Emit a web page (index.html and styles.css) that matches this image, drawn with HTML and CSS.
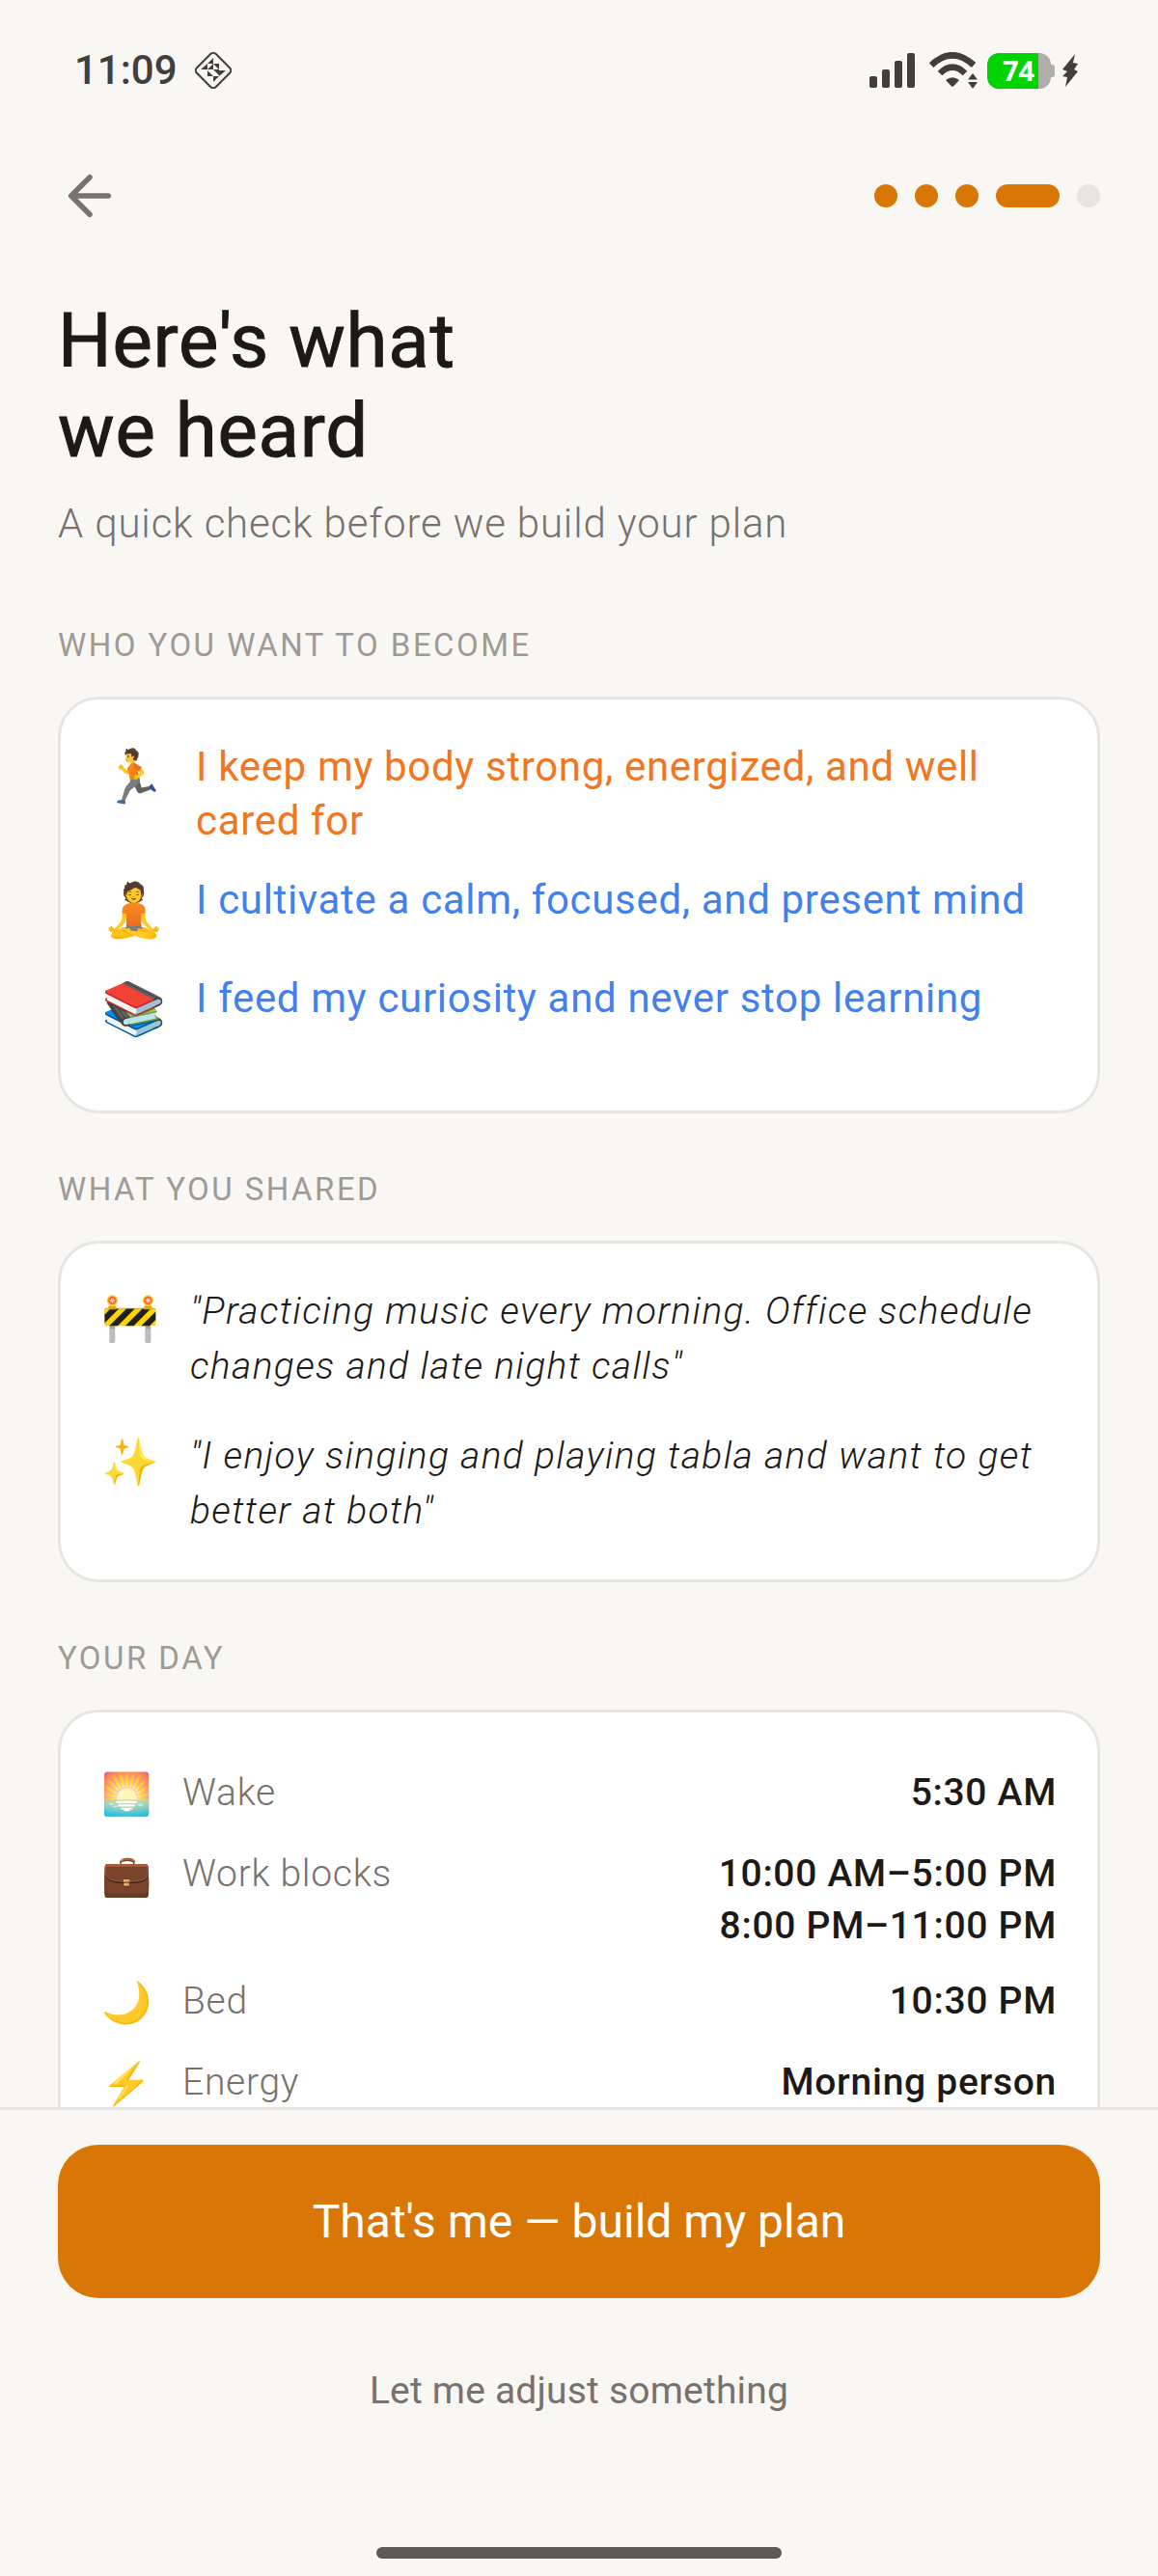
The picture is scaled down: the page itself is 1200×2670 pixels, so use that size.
FILE: index.html
```html
<!DOCTYPE html>
<html lang="en">
<head>
<meta charset="utf-8">
<meta name="viewport" content="width=device-width, initial-scale=1">
<title>Here's what we heard</title>
<link rel="stylesheet" href="styles.css">
</head>
<body>
<div class="app">
  <div class="status">
    <div class="status-left">
      <span class="time">11:09</span>
      <svg width="38" height="38" viewBox="0 0 38 38" aria-hidden="true">
        <rect x="5" y="5" width="28" height="28" rx="4" transform="rotate(45 19 19)" fill="none" stroke="#403f3c" stroke-width="2"/>
        <g fill="#403f3c"><path d="M19 6v6h-6zM13 12v6H6zM19 12h6v6zM13 18h6v-6zM19 18h6v6zM25 19h7l-7 6zM13 19v6h6zM19 25h6l-6 6z"/></g>
      </svg>
    </div>
    <div class="status-right">
      <svg class="signal" width="47" height="38" viewBox="0 0 47 38" aria-hidden="true"><g fill="#403f3c"><rect x="0" y="25" width="8" height="12" rx="2"/><rect x="13" y="18" width="8" height="19" rx="2"/><rect x="26" y="9" width="8" height="28" rx="2"/><rect x="39" y="1" width="8" height="36" rx="2"/></g></svg>
      <svg width="50" height="38" viewBox="0 0 50 38" aria-hidden="true"><g fill="none" stroke="#403f3c" stroke-width="6.500"><path d="M2 13.500Q24-7 46 13.500"/><path d="M11 22Q24 9 37 22"/></g><path d="M17 29q7-5.500 14 0l-5.500 6q-1.500 1.500-3 0z" fill="#403f3c"/><path d="M45 22l5 6.500H40zM45 38l5-7H40z" fill="#403f3c"/></svg>
      <span class="battery"><span class="battery-level">74</span></span>
      <svg width="18" height="38" viewBox="0 0 18 38" aria-hidden="true"><path d="M15 2L2 18l5 2-5 5 5 1-2 10 13-16-4-2 4-6-5-1z" fill="#403f3c"/></svg>
    </div>
  </div>

  <header class="nav">
    <button class="back" type="button" aria-label="Back">
      <svg width="66" height="66" viewBox="0 0 24 24" fill="none" stroke="currentColor" stroke-width="2" stroke-linecap="round" stroke-linejoin="round" aria-hidden="true"><path d="M19 12H5M12 19l-7-7 7-7"/></svg>
    </button>
    <div class="steps" role="img" aria-label="Step 4 of 5">
      <span class="step"></span><span class="step"></span><span class="step"></span><span class="step step-current"></span><span class="step step-next"></span>
    </div>
  </header>

  <main class="content">
    <h1>Here's what<br>we heard</h1>
    <p class="subtitle">A quick check before we build your plan</p>

    <section>
      <h2>WHO YOU WANT TO BECOME</h2>
      <ul class="card identities">
        <li><span class="emoji">🏃</span><span>I keep my body strong, energized, and well cared for</span></li>
        <li class="mind"><span class="emoji">🧘</span><span>I cultivate a calm, focused, and present mind</span></li>
        <li class="mind"><span class="emoji">📚</span><span>I feed my curiosity and never stop learning</span></li>
      </ul>
    </section>

    <section>
      <h2>WHAT YOU SHARED</h2>
      <ul class="card quotes">
        <li><span class="emoji">🚧</span><q>Practicing music every morning. Office schedule changes and late night calls</q></li>
        <li><span class="emoji">✨</span><q>I enjoy singing and playing tabla and want to get better at both</q></li>
      </ul>
    </section>

    <section>
      <h2>YOUR DAY</h2>
      <dl class="card day">
        <div><dt><span class="emoji">🌅</span>Wake</dt><dd>5:30 AM</dd></div>
        <div><dt><span class="emoji">💼</span>Work blocks</dt><dd>10:00 AM–5:00 PM<br>8:00 PM–11:00 PM</dd></div>
        <div><dt><span class="emoji">🌙</span>Bed</dt><dd>10:30 PM</dd></div>
        <div><dt><span class="emoji">⚡</span>Energy</dt><dd>Morning person</dd></div>
      </dl>
    </section>
  </main>

  <footer class="actions">
    <button class="primary" type="button">That's me — build my plan</button>
    <button class="secondary" type="button">Let me adjust something</button>
    <div class="home-bar"></div>
  </footer>
</div>
</body>
</html>
```
FILE: styles.css
```css
* { box-sizing: border-box; margin: 0; padding: 0; }
body { background: #f9f7f4; color: #1c1917; font-family: Roboto, sans-serif; }
button { border: 0; background: none; font: inherit; color: inherit; cursor: pointer; }
svg { display: block; }
ul { list-style: none; }
.app { display: flex; flex-direction: column; height: 100vh; }

.status { display: flex; justify-content: space-between; align-items: center; height: 146px; padding: 0 83px 0 77px; flex: none; }
.status-left { display: flex; align-items: center; gap: 18px; }
.status-right { display: flex; align-items: center; gap: 10px; }
.signal { margin-right: 5px; }
.time { font-size: 42px; line-height: 48px; font-weight: 500; color: #403f3c; }
.battery { position: relative; width: 66px; height: 37px; border-radius: 12px; background: linear-gradient(to right, #00d300 53px, #b0acab 53px); }
.battery::after { content: ""; position: absolute; right: -4px; top: 12px; width: 4px; height: 13px; border-radius: 0 3px 3px 0; background: #b0acab; }
.battery-level { display: block; padding-left: 16px; font: 700 29px/36px "Noto Sans", sans-serif; color: #fff; }

.nav { display: flex; justify-content: space-between; align-items: center; height: 114px; padding: 0 60px; flex: none; }
.back { color: #78716c; }
.steps { display: flex; gap: 18px; }
.step { width: 24px; height: 24px; border-radius: 12px; background: #d97706; }
.step-current { width: 66px; }
.step-next { background: #e7e5e4; }

.content { flex: 1; min-height: 0; overflow-y: auto; scrollbar-width: none; padding: 47px 60px 60px; }
h1 { font-size: 78px; line-height: 93px; font-weight: 400; -webkit-text-stroke: 1px currentColor; letter-spacing: 0.01em; }
.subtitle { margin-top: 21px; font-size: 42px; line-height: 57px; font-weight: 300; letter-spacing: 0.02em; color: #78716c; }
section { margin-top: 59px; }
.subtitle + section { margin-top: 78px; }
h2 { margin-bottom: 33px; font-size: 33px; line-height: 40px; font-weight: 400; letter-spacing: 0.075em; color: #a09a95; }
.card { padding: 42px; border: 3px solid #e7e5e4; border-radius: 42px; background: #fff; }
.emoji { flex: none; letter-spacing: 0; }

.identities li { display: flex; gap: 30px; min-height: 78px; margin-bottom: 24px; font-size: 42px; line-height: 56px; letter-spacing: 0.016em; color: #f07620; }
.identities .mind { color: #4280eb; }
.identities .emoji { width: 68px; font-size: 54px; line-height: 78px; }
.identities li:first-child { min-height: 114px; }

.quotes { display: flex; flex-direction: column; gap: 36px; }
.quotes li { display: flex; gap: 30px; font-size: 39px; line-height: 57px; letter-spacing: 0.035em; }
.quotes .emoji { width: 62px; font-size: 48px; line-height: 70px; }
.quotes q { font-style: italic; font-weight: 300; quotes: '"' '"'; }

.day { padding-top: 44px; }
.day div { display: flex; justify-content: space-between; align-items: flex-start; min-height: 84px; padding: 12px 0; font-size: 39px; line-height: 54px; letter-spacing: 0.018em; }
.day dt { display: flex; gap: 30px; font-weight: 300; color: #78716c; }
.day dd { font-weight: 500; text-align: right; }
.day .emoji { width: 54px; font-size: 42px; line-height: 58px; }

.actions { display: flex; flex-direction: column; align-items: center; flex: none; padding: 36px 60px 18px; border-top: 3px solid #e7e5e4; }
.primary { width: 100%; height: 159px; border-radius: 42px; background: #d97706; color: #fff; font-size: 48px; }
.secondary { margin-top: 48px; height: 96px; font-size: 39px; letter-spacing: 0.005em; color: #78716c; }
.home-bar { width: 420px; height: 12px; margin-top: 114px; border-radius: 6px; background: #5c5a58; }
```
